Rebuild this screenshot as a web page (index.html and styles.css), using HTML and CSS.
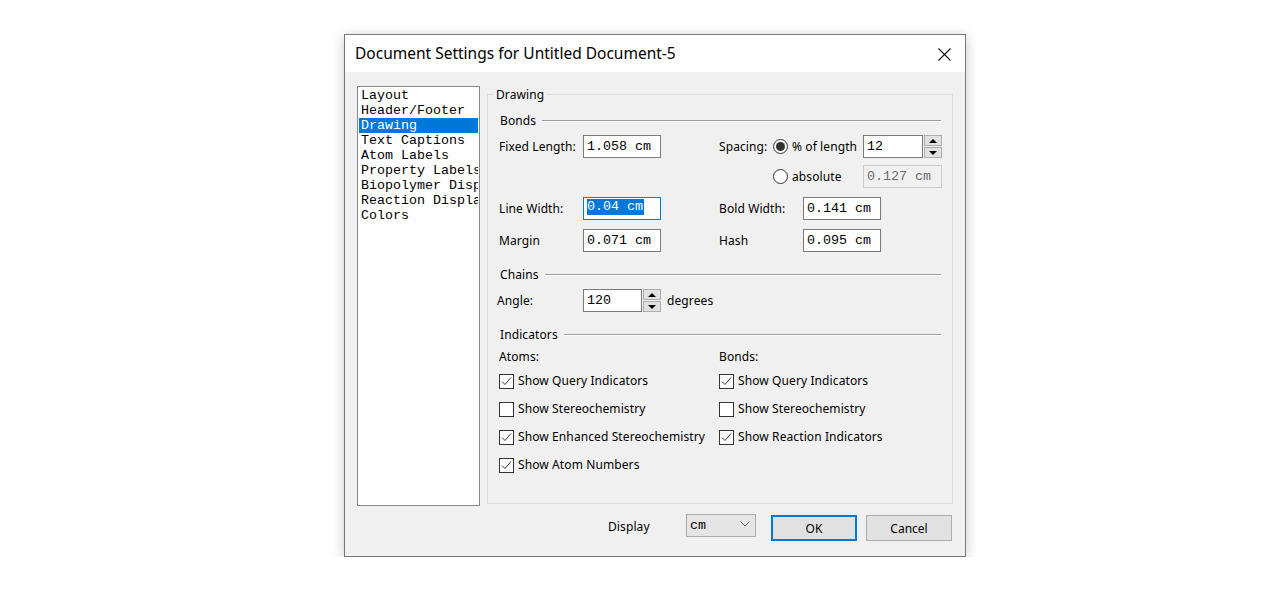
FILE: index.html
```html
<!DOCTYPE html>
<html>
<head>
<meta charset="utf-8">
<title>Document Settings</title>
<link rel="stylesheet" href="styles.css">
</head>
<body>
<div class="stage">
  <div class="dialog">
    <div class="titlebar">
      <span class="title">Document Settings for Untitled Document-5</span>
      <svg class="close" width="13" height="13" viewBox="0 0 13 13"><path d="M0.5 0.5 L12.5 12.5 M12.5 0.5 L0.5 12.5" stroke="#111" stroke-width="1.1" fill="none"/></svg>
    </div>
    <div class="client">
      <div class="main">
        <ul class="list">
          <li>Layout</li>
          <li>Header/Footer</li>
          <li class="sel">Drawing</li>
          <li>Text Captions</li>
          <li>Atom Labels</li>
          <li>Property Labels</li>
          <li>Biopolymer Display</li>
          <li>Reaction Display</li>
          <li>Colors</li>
        </ul>
        <fieldset class="group">
          <legend>Drawing</legend>
          <div class="gbody">
            <div class="sect sect-bonds"><span>Bonds</span></div>
            <div class="bonds">
              <span class="lbl c1 r1">Fixed Length:</span>
              <div class="field c2 r1">1.058 cm</div>
              <span class="lbl c4 r1">Spacing:</span>
              <label class="opt c5 r1"><span class="radio on"></span>% of length</label>
              <div class="spin c7 r1"><div class="field f-num">12</div><div class="spinbtns"><span class="up"></span><span class="dn"></span></div></div>
              <label class="opt c5 r2"><span class="radio"></span>absolute</label>
              <div class="field disabled c7 r2">0.127 cm</div>
              <span class="lbl c1 r3">Line Width:</span>
              <div class="field focus c2 r3"><span class="hl">0.04 cm</span></div>
              <span class="lbl c4w r3">Bold Width:</span>
              <div class="field c6 r3">0.141 cm</div>
              <span class="lbl c1 r4">Margin</span>
              <div class="field c2 r4">0.071 cm</div>
              <span class="lbl c4w r4">Hash</span>
              <div class="field c6 r4">0.095 cm</div>
            </div>
            <div class="sect sect-chains"><span>Chains</span></div>
            <div class="angle">
              <span class="lbl angle-lbl">Angle:</span>
              <div class="spin"><div class="field f-angle">120</div><div class="spinbtns"><span class="up"></span><span class="dn"></span></div></div>
              <span class="lbl deg">degrees</span>
            </div>
            <div class="sect sect-ind"><span>Indicators</span></div>
            <div class="checks">
              <span class="lbl colhead">Atoms:</span>
              <span class="lbl colhead">Bonds:</span>
              <label class="chk"><span class="box on"><svg width="13" height="13" viewBox="0 0 13 13"><path d="M2 6.5 L5 9.5 L11 2.5" stroke="#333" stroke-width="1" fill="none"/></svg></span><span class="ct">Show Query Indicators</span></label>
              <label class="chk"><span class="box on"><svg width="13" height="13" viewBox="0 0 13 13"><path d="M2 6.5 L5 9.5 L11 2.5" stroke="#333" stroke-width="1" fill="none"/></svg></span><span class="ct">Show Query Indicators</span></label>
              <label class="chk"><span class="box"></span><span class="ct">Show Stereochemistry</span></label>
              <label class="chk"><span class="box"></span><span class="ct">Show Stereochemistry</span></label>
              <label class="chk"><span class="box on"><svg width="13" height="13" viewBox="0 0 13 13"><path d="M2 6.5 L5 9.5 L11 2.5" stroke="#333" stroke-width="1" fill="none"/></svg></span><span class="ct">Show Enhanced Stereochemistry</span></label>
              <label class="chk"><span class="box on"><svg width="13" height="13" viewBox="0 0 13 13"><path d="M2 6.5 L5 9.5 L11 2.5" stroke="#333" stroke-width="1" fill="none"/></svg></span><span class="ct">Show Reaction Indicators</span></label>
              <label class="chk"><span class="box on"><svg width="13" height="13" viewBox="0 0 13 13"><path d="M2 6.5 L5 9.5 L11 2.5" stroke="#333" stroke-width="1" fill="none"/></svg></span><span class="ct">Show Atom Numbers</span></label>
            </div>
          </div>
        </fieldset>
      </div>
      <div class="footer">
        <span class="lbl disp">Display</span>
        <div class="select"><span>cm</span><svg width="10" height="6" viewBox="0 0 10 6"><path d="M0.5 0.5 L5 5 L9.5 0.5" stroke="#666" stroke-width="1" fill="none"/></svg></div>
        <button class="btn ok">OK</button>
        <button class="btn">Cancel</button>
      </div>
    </div>
  </div>
</div>
</body>
</html>
```

FILE: styles.css
```css
* { box-sizing: border-box; }
html, body { margin: 0; padding: 0; background: #fff; }
body {
  font-family: "Noto Sans", "Open Sans", sans-serif;
  font-size: 12px;
  letter-spacing: 0.1px;
  color: #000;
}
.stage { padding: 34px 0 0 344px; }
.dialog {
  width: 622px;
  height: 523px;
  border: 1px solid #777;
  background: #f0f0f0;
  box-shadow: 0 2px 12px rgba(0,0,0,0.22);
  display: flex;
  flex-direction: column;
}
.titlebar {
  height: 37px;
  background: #fff;
  display: flex;
  align-items: center;
  padding: 0 14px 0 10px;
  justify-content: space-between;
}
.title { font-size: 15.5px; line-height: 20px; letter-spacing: 0; color: #000; margin-top: -1px; }
.close { display: block; margin-top: 1px; }
.client { flex: 1; padding: 14px 12px 0 12px; }
.main { display: flex; align-items: flex-start; gap: 7px; }

.list {
  list-style: none;
  margin: 0;
  width: 123px;
  height: 420px;
  padding: 1px;
  border: 1px solid #828790;
  background: #fff;
  overflow: hidden;
  font-family: "Liberation Mono", "DejaVu Sans Mono", monospace;
  font-size: 13.33px;
  letter-spacing: 0;
}
.list li {
  height: 15px;
  line-height: 14px;
  padding: 1px 0 0 2px;
  white-space: nowrap;
  overflow: hidden;
}
.list li.sel { background: #0078d7; color: #fff; }

.group {
  margin: 0;
  padding: 0;
  width: 466px;
  height: 418px;
  border: 1px solid #dcdcdc;
  min-width: 0;
}
.group legend {
  margin-left: 5px;
  padding: 2px 3px 0 3px;
  line-height: 14px;
  font-size: 12px;
}
.gbody { padding: 11px 10px 0 11px; }
.sect {
  display: flex;
  align-items: center;
  gap: 6px;
  height: 16px;
  line-height: 16px;
  padding-left: 1px;
  margin-right: 1px;
}
.sect::after {
  content: "";
  flex: 1;
  border-top: 1px solid #a0a0a0;
  border-bottom: 1px solid #fff;
}
.lbl { line-height: 23px; white-space: nowrap; }

.bonds {
  margin-top: 6px;
  display: grid;
  grid-template-columns: 84px 78px 58px 54px 30px 60px 79px;
  grid-template-rows: 30px 32px 32px 23px;
  align-items: start;
}
.c1 { grid-column: 1; }
.c2 { grid-column: 2; }
.c4 { grid-column: 4; }
.c4w { grid-column: 4 / span 2; }
.c5 { grid-column: 5 / span 2; }
.c6 { grid-column: 6 / span 2; }
.c7 { grid-column: 7; }
.r1 { grid-row: 1; }
.r2 { grid-row: 2; }
.r3 { grid-row: 3; }
.r4 { grid-row: 4; }

.field {
  width: 78px;
  height: 23px;
  border: 1px solid #7a7a7a;
  background: #fff;
  font-family: "Liberation Mono", "DejaVu Sans Mono", monospace;
  font-size: 13.33px;
  letter-spacing: 0;
  line-height: 21px;
  padding-left: 3px;
  white-space: nowrap;
  overflow: hidden;
}
.field.disabled {
  width: 79px;
  border-color: #cccccc;
  background: #f0f0f0;
  color: #6d6d6d;
}
.field.focus { border-color: #0078d7; }
.hl {
  display: inline-block;
  background: #0078d7;
  color: #fff;
  line-height: 16px;
  vertical-align: top;
  margin-top: 1px;
  padding-right: 1px;
}
.f-num { width: 60px; }
.f-angle { width: 59px; }

.opt { display: flex; align-items: center; height: 23px; white-space: nowrap; }
.radio {
  width: 15px;
  height: 15px;
  border: 1px solid #333;
  border-radius: 50%;
  background: #fff;
  margin-right: 4px;
  flex: none;
  display: flex;
  align-items: center;
  justify-content: center;
}
.radio.on::after {
  content: "";
  width: 9px;
  height: 9px;
  border-radius: 50%;
  background: #333;
}

.spin { display: flex; align-items: flex-start; }
.spinbtns {
  margin-left: 1px;
  width: 18px;
  height: 23px;
  display: flex;
  flex-direction: column;
  gap: 1px;
}
.spinbtns span {
  flex: 1;
  background: #e1e1e1;
  border: 1px solid #adadad;
  display: flex;
  align-items: center;
  justify-content: center;
}
.spinbtns .up::after {
  content: "";
  border-left: 4px solid transparent;
  border-right: 4px solid transparent;
  border-bottom: 4px solid #000;
}
.spinbtns .dn::after {
  content: "";
  border-left: 4px solid transparent;
  border-right: 4px solid transparent;
  border-top: 4px solid #000;
}

.sect-chains { margin-top: 15px; }
.angle {
  margin-top: 6px;
  display: flex;
  align-items: flex-start;
  height: 23px;
}
.angle-lbl { width: 84px; margin-left: -2px; }
.angle .spin { margin-left: 2px; }
.deg { margin-left: 6px; }

.sect-ind { margin-top: 15px; }
.checks {
  margin-top: 6px;
  display: grid;
  grid-template-columns: 220px 1fr;
  grid-template-rows: 22px;
  grid-auto-rows: 28px;
}
.colhead { line-height: 16px; height: 16px; }
.chk {
  display: flex;
  align-items: center;
  height: 20px;
  white-space: nowrap;
  overflow: hidden;
  width: 206px;
}
.box {
  width: 15px;
  height: 15px;
  border: 1px solid #333;
  background: #fff;
  flex: none;
  margin-right: 4px;
  display: block;
}
.box svg { display: block; }
.ct { line-height: 20px; }

.footer {
  margin-top: 8px;
  display: flex;
  align-items: flex-start;
  justify-content: flex-end;
  padding-right: 1px;
}
.disp { width: 78px; line-height: 26px; }
.select {
  width: 70px;
  height: 23px;
  border: 1px solid #acacac;
  background: #e5e5e5;
  display: flex;
  align-items: center;
  justify-content: space-between;
  padding: 0 5px 0 3px;
  font-family: "Liberation Mono", "DejaVu Sans Mono", monospace;
  font-size: 13.33px;
  letter-spacing: 0;
  margin-right: 15px;
}
.select svg { display: block; margin-top: -4px; }
.btn {
  width: 86px;
  height: 26px;
  margin-top: 1px;
  border: 1px solid #adadad;
  background: #e1e1e1;
  font-family: "Noto Sans", "Open Sans", sans-serif;
  font-size: 12px;
  color: #000;
  padding: 0;
}
.btn.ok { border: 2px solid #0078d7; margin-right: 9px; }
```
